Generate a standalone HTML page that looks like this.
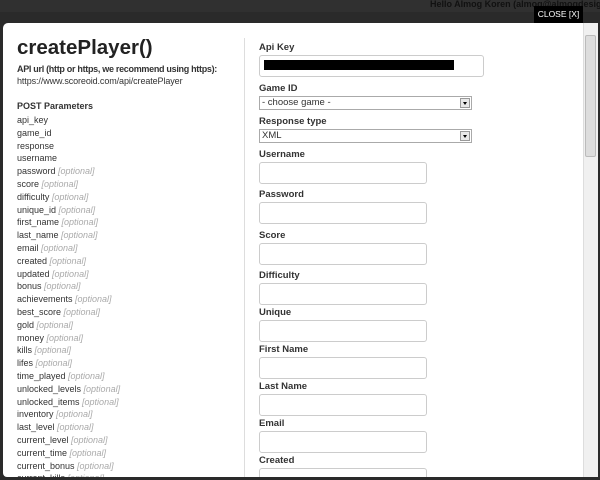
<!DOCTYPE html>
<html><head><style>
body{margin:0;width:600px;height:480px;background:#2a2a2a;font-family:"Liberation Sans",Arial,sans-serif;position:relative;overflow:hidden;color:#333}
.top{position:absolute;left:0;top:0;width:600px;height:12px;background:#303030}
.hello{position:absolute;left:430px;top:-1px;font-size:9px;font-weight:bold;color:#111;white-space:nowrap}
.close{position:absolute;left:534px;top:6px;width:49px;height:17px;background:#000;color:#fff;font-size:8.5px;line-height:17px;text-align:center}
.modal{position:absolute;left:3px;top:23px;width:595px;height:454px;background:#fff;border-radius:5px 0 0 4px;overflow:hidden}
.sb{position:absolute;right:0;top:0;width:14px;height:454px;background:#f0f0f0;border-left:1px solid #ddd}
.thumb{position:absolute;right:2px;top:12px;width:9px;height:120px;background:#ddd;border:1px solid #bbb;border-radius:2px}
.t{position:absolute;white-space:nowrap;font-size:9.5px}
.l{font-size:9px}
.b{font-weight:bold}
.o{color:#aaa;font-style:italic}
.div{position:absolute;left:241px;top:15px;width:1px;height:440px;background:#ddd}
.in{position:absolute;border:1px solid #ccc;border-radius:3px;background:#fff}
.sel{position:absolute;border:1px solid #aaa;background:#fff;font-size:9.5px;line-height:12px;padding-left:2px;box-sizing:border-box}
.sel i{position:absolute;right:1px;top:1px;width:10px;height:10px;background:#e8e8e8;border:1px solid #999;box-sizing:border-box}
.sel i:after{content:"";position:absolute;left:2px;top:3px;border:2.5px solid transparent;border-top:3px solid #000}
</style></head><body>
<div class="top"></div>
<div class="hello">Hello Almog Koren (almog@almogdesign.ne</div>
<div class="modal">
<div class="t b" style="left:14px;top:13px;font-size:20.5px;color:#222">createPlayer()</div>
<div class="t b l" style="left:14px;top:41px;letter-spacing:-0.3px">API url (http or https, we recommend using https):</div>
<div class="t l" style="left:14px;top:53px;letter-spacing:-0.1px">https://www.scoreoid.com/api/createPlayer</div>
<div class="t b l" style="left:14px;top:78px">POST Parameters</div>
<div style="position:absolute;left:14px;top:91px;font-size:9px;line-height:12.8px;white-space:nowrap">
api_key<br>game_id<br>response<br>username<br>password <span class="o">[optional]</span><br>score <span class="o">[optional]</span><br>difficulty <span class="o">[optional]</span><br>unique_id <span class="o">[optional]</span><br>first_name <span class="o">[optional]</span><br>last_name <span class="o">[optional]</span><br>email <span class="o">[optional]</span><br>created <span class="o">[optional]</span><br>updated <span class="o">[optional]</span><br>bonus <span class="o">[optional]</span><br>achievements <span class="o">[optional]</span><br>best_score <span class="o">[optional]</span><br>gold <span class="o">[optional]</span><br>money <span class="o">[optional]</span><br>kills <span class="o">[optional]</span><br>lifes <span class="o">[optional]</span><br>time_played <span class="o">[optional]</span><br>unlocked_levels <span class="o">[optional]</span><br>unlocked_items <span class="o">[optional]</span><br>inventory <span class="o">[optional]</span><br>last_level <span class="o">[optional]</span><br>current_level <span class="o">[optional]</span><br>current_time <span class="o">[optional]</span><br>current_bonus <span class="o">[optional]</span><br>current_kills <span class="o">[optional]</span>
</div>
<div class="div"></div>
<div class="t b" style="left:256px;top:19px">Api Key</div>
<div class="in" style="left:256px;top:32px;width:223px;height:20px"><div style="position:absolute;left:4px;top:4px;width:190px;height:10px;background:#000"></div></div>
<div class="t b" style="left:256px;top:60px">Game ID</div>
<div class="sel" style="left:256px;top:73px;width:213px;height:14px">- choose game -<i></i></div>
<div class="t b" style="left:256px;top:93px">Response type</div>
<div class="sel" style="left:256px;top:106px;width:213px;height:14px">XML<i></i></div>
<div class="t b" style="left:256px;top:126px">Username</div>
<div class="in" style="left:256px;top:139px;width:166px;height:20px"></div>
<div class="t b" style="left:256px;top:166px">Password</div>
<div class="in" style="left:256px;top:179px;width:166px;height:20px"></div>
<div class="t b" style="left:256px;top:207px">Score</div>
<div class="in" style="left:256px;top:220px;width:166px;height:20px"></div>
<div class="t b" style="left:256px;top:247px">Difficulty</div>
<div class="in" style="left:256px;top:260px;width:166px;height:20px"></div>
<div class="t b" style="left:256px;top:284px">Unique</div>
<div class="in" style="left:256px;top:297px;width:166px;height:20px"></div>
<div class="t b" style="left:256px;top:321px">First Name</div>
<div class="in" style="left:256px;top:334px;width:166px;height:20px"></div>
<div class="t b" style="left:256px;top:358px">Last Name</div>
<div class="in" style="left:256px;top:371px;width:166px;height:20px"></div>
<div class="t b" style="left:256px;top:395px">Email</div>
<div class="in" style="left:256px;top:408px;width:166px;height:20px"></div>
<div class="t b" style="left:256px;top:432px">Created</div>
<div class="in" style="left:256px;top:445px;width:166px;height:20px"></div>
<div class="sb"><div class="thumb"></div></div>
</div>
<div class="close">CLOSE [X]</div>
</body></html>
